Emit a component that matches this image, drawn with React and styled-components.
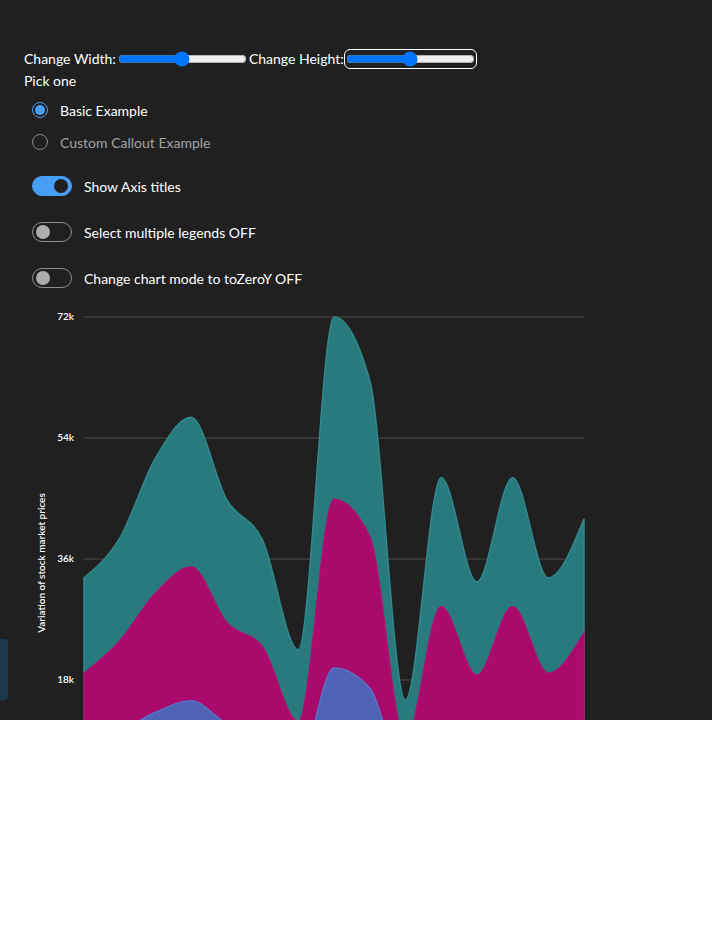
import styled, { createGlobalStyle } from "styled-components";

const GlobalStyle = createGlobalStyle`
  body {
    margin: 0;
    background: #ffffff;
  }
`;

const Page = styled.div`
  position: relative;
  height: 720px;
  overflow: hidden;
  box-sizing: border-box;
  padding: 49px 0 0 24px;
  background: #202020;
  color: #ffffff;
  font-family: "Segoe UI", Lato, "Liberation Sans", sans-serif;
  font-size: 14px;
`;

const SliderRow = styled.div`
  display: flex;
  align-items: center;
  height: 20px;
  line-height: 20px;
`;

const Range = styled.input`
  width: 129px;
  height: 16px;
  margin: 2px;
  border-radius: 4px;
  outline: ${(props) => (props.$focused ? "1px solid #ffffff" : "none")};
  outline-offset: 1px;
`;

const PickLabel = styled.div`
  margin-top: 2px;
  line-height: 20px;
`;

const RadioGroup = styled.div`
  margin-top: 3px;
  padding-left: 8px;
`;

const RadioItem = styled.label`
  display: flex;
  align-items: center;
  gap: 12px;
  height: 32px;
  color: ${(props) => (props.$checked ? "#ffffff" : "#a3a3a3")};
`;

const RadioCircle = styled.span`
  position: relative;
  width: 16px;
  height: 16px;
  box-sizing: border-box;
  border-radius: 50%;
  border: 1px solid ${(props) => (props.$checked ? "#479ef5" : "#8a8a8a")};

  &::after {
    content: "";
    display: ${(props) => (props.$checked ? "block" : "none")};
    position: absolute;
    left: 2px;
    top: 2px;
    width: 10px;
    height: 10px;
    border-radius: 50%;
    background: #479ef5;
  }
`;

const Toggles = styled.div`
  margin-top: 5px;
  padding-left: 8px;
`;

const ToggleRow = styled.label`
  display: flex;
  align-items: center;
  gap: 12px;
  height: 46px;
`;

const Track = styled.span`
  position: relative;
  width: 40px;
  height: 20px;
  box-sizing: border-box;
  border-radius: 10px;
  background: ${(props) => (props.$on ? "#479ef5" : "transparent")};
  border: 1px solid ${(props) => (props.$on ? "#479ef5" : "#8f8f8f")};

  &::after {
    content: "";
    position: absolute;
    top: 2px;
    left: ${(props) => (props.$on ? "21px" : "3px")};
    width: 14px;
    height: 14px;
    border-radius: 50%;
    background: ${(props) => (props.$on ? "#1f1f1f" : "#adadad")};
  }
`;

const ChartSvg = styled.svg`
  display: block;
  margin: 1px 0 0 -24px;
  overflow: visible;
`;

const SideTab = styled.div`
  position: absolute;
  left: 0;
  top: 639px;
  width: 8px;
  height: 61px;
  background: #1b3a4f;
  border-radius: 0 4px 4px 0;
`;

// values in thousands, 15 points per series (stacked tops)
const series = [
  {
    name: "teal",
    fill: "#287a7d",
    stroke: "#31898d",
    values: [33.2, 39.1, 51.0, 57.1, 44.8, 38.8, 22.5, 72.0, 62.6, 15.0, 48.1, 32.6, 48.1, 33.2, 42.0],
  },
  {
    name: "magenta",
    fill: "#a90a6b",
    stroke: "#b20c72",
    values: [19.0, 23.8, 30.9, 34.8, 26.5, 22.9, 11.8, 44.9, 39.3, 9.1, 28.9, 18.7, 28.9, 19.0, 25.0],
  },
  {
    name: "blue",
    fill: "#4f62b4",
    stroke: "#5b70c8",
    values: [8.2, 10.3, 13.2, 14.9, 11.5, 9.8, 5.1, 19.8, 16.8, 3.9, 11.2, 8.0, 11.2, 8.0, 10.7],
  },
];

const X0 = 84;
const X1 = 584;
const Y_ZERO = 499;
const PX_PER_K = 484 / 72;
const ticks = [72, 54, 36, 18];

const yOf = (v) => Y_ZERO - v * PX_PER_K;
const xOf = (i, n) => X0 + (i * (X1 - X0)) / (n - 1);

const sgn = (x) => (x < 0 ? -1 : 1);

function monotonePath(pts) {
  const n = pts.length;
  const t = new Array(n).fill(0);
  for (let i = 1; i < n - 1; i++) {
    const [x0, y0] = pts[i - 1];
    const [x1, y1] = pts[i];
    const [x2, y2] = pts[i + 1];
    const h0 = x1 - x0;
    const h1 = x2 - x1;
    const s0 = (y1 - y0) / h0;
    const s1 = (y2 - y1) / h1;
    const p = (s0 * h1 + s1 * h0) / (h0 + h1);
    t[i] = (sgn(s0) + sgn(s1)) * Math.min(Math.abs(s0), Math.abs(s1), 0.5 * Math.abs(p)) || 0;
  }
  const h = pts[1][0] - pts[0][0];
  t[0] = ((3 * (pts[1][1] - pts[0][1])) / h - t[1]) / 2;
  const hn = pts[n - 1][0] - pts[n - 2][0];
  t[n - 1] = ((3 * (pts[n - 1][1] - pts[n - 2][1])) / hn - t[n - 2]) / 2;

  let d = `M${pts[0][0]},${pts[0][1]}`;
  for (let i = 0; i < n - 1; i++) {
    const [x0, y0] = pts[i];
    const [x1, y1] = pts[i + 1];
    const dx = (x1 - x0) / 3;
    d += ` C${x0 + dx},${y0 + dx * t[i]} ${x1 - dx},${y1 - dx * t[i + 1]} ${x1},${y1}`;
  }
  return d;
}

function areaPath(values) {
  const pts = values.map((v, i) => [xOf(i, values.length), yOf(v)]);
  return `${monotonePath(pts)} L${X1},${Y_ZERO} L${X0},${Y_ZERO} Z`;
}

const AreaChart = () => (
  <ChartSvg width="712" height="520" viewBox="0 0 712 520">
    {ticks.map((t) => (
      <g key={t}>
        <line x1={X0} x2={X1} y1={yOf(t)} y2={yOf(t)} stroke="#4a4a4a" strokeWidth="1" />
        <text
          x="74"
          y={yOf(t)}
          fill="#ffffff"
          fontSize="10"
          fontWeight="600"
          textAnchor="end"
          dominantBaseline="middle"
        >
          {t}k
        </text>
      </g>
    ))}
    {series.map((s) => (
      <path key={s.name} d={areaPath(s.values)} fill={s.fill} stroke={s.stroke} strokeWidth="1.5" />
    ))}
    <text
      transform="translate(45 261) rotate(-90)"
      fill="#ffffff"
      fontSize="10"
      fontWeight="600"
      textAnchor="middle"
    >
      Variation of stock market prices
    </text>
  </ChartSvg>
);

const App = () => {
  return (
    <>
      <GlobalStyle />
      <Page>
        <SliderRow>
          Change Width:
          <Range type="range" min="0" max="100" defaultValue="50" />
          Change Height:
          <Range type="range" min="0" max="100" defaultValue="50" $focused />
        </SliderRow>
        <PickLabel>Pick one</PickLabel>
        <RadioGroup>
          <RadioItem $checked>
            <RadioCircle $checked />
            Basic Example
          </RadioItem>
          <RadioItem>
            <RadioCircle />
            Custom Callout Example
          </RadioItem>
        </RadioGroup>
        <Toggles>
          <ToggleRow>
            <Track $on />
            Show Axis titles
          </ToggleRow>
          <ToggleRow>
            <Track />
            Select multiple legends OFF
          </ToggleRow>
          <ToggleRow>
            <Track />
            Change chart mode to toZeroY OFF
          </ToggleRow>
        </Toggles>
        <AreaChart />
        <SideTab />
      </Page>
    </>
  );
};

export default App;
